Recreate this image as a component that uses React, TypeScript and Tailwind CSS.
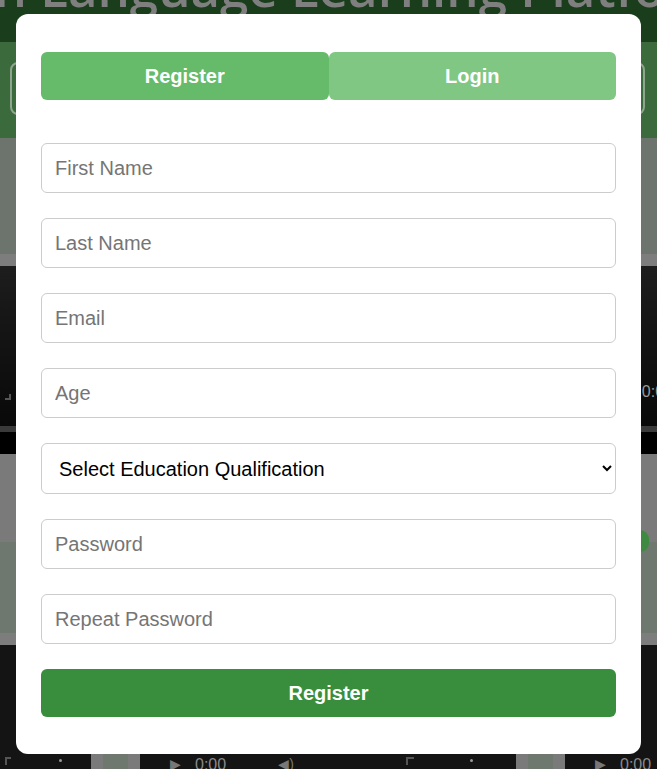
import { useState } from 'react';

const sans = { fontFamily: '"Liberation Sans", Arial, sans-serif' };

const Backdrop = () => (
  <div className="flex flex-col w-full h-full">
    <div className="h-[42px] bg-[#1a3d1b] overflow-hidden shrink-0">
      <p
        className="whitespace-nowrap text-[51px] leading-none font-semibold text-[#7f7f7f] ml-[-76px] mt-[-38px]"
        style={{ fontFamily: '"Open Sans", sans-serif' }}
      >
        Sign Language Learning Platform
      </p>
    </div>
    <div className="h-[96px] bg-[#3b6b3d] px-[10px] pt-[20px] shrink-0">
      <div className="h-[53px] w-[635px] rounded-lg border-2 border-[#8fa58f]" />
    </div>
    <div className="h-[116px] bg-[#6d746d] shrink-0" />
    <div className="h-[12px] bg-[#7d7d7d] shrink-0" />
    <div className="h-[160px] bg-gradient-to-b from-[#1d1d1d] to-[#090909] flex items-end justify-between pb-[26px] shrink-0">
      <span className="ml-[5px] w-[6px] h-[6px] border-r-2 border-b-2 border-[#555]" />
      <span className="text-[16px] leading-none text-[#9a9a9a] mr-[-16px]" style={sans}>
        0:00
      </span>
    </div>
    <div className="h-[6px] bg-[#3a3a3a] shrink-0" />
    <div className="h-[22px] bg-black shrink-0" />
    <div className="h-[88px] bg-[#7a7a7a] shrink-0" />
    <div className="h-[91px] bg-[#6e786e] flex justify-end shrink-0">
      <span className="mt-[-12px] mr-[8px] w-[18px] h-[22px] rounded-full bg-[#3f8a42]" />
    </div>
    <div className="h-[12px] bg-[#7d7d7d] shrink-0" />
    <div className="flex-1 flex bg-[#141414]">
      <div className="w-[91px] flex items-start pt-[112px] text-[#8a8a8a]">
        <span className="ml-[5px] w-[6px] h-[8px] border-l-2 border-t-2 border-[#555]" />
        <span className="ml-[48px] w-[3px] h-[3px] rounded-full bg-[#9a9a9a] mt-[2px]" />
      </div>
      <div className="w-[49px] bg-[#7a7a7a] flex justify-center">
        <div className="w-[25px] bg-[#6e786e]" />
      </div>
      <div className="w-[376px] flex items-start pt-[112px] text-[#8a8a8a]" style={sans}>
        <span className="ml-[30px] text-[14px] leading-none text-[#777]">▶</span>
        <span className="ml-[14px] text-[16px] leading-none">0:00</span>
        <span className="ml-[52px] text-[14px] leading-none text-[#777]">◀)</span>
        <span className="ml-[112px] w-[8px] h-[8px] border-l-2 border-t-2 border-[#555]" />
        <span className="ml-[56px] w-[3px] h-[3px] rounded-full bg-[#9a9a9a] mt-[2px]" />
      </div>
      <div className="w-[49px] bg-[#7a7a7a] flex justify-center">
        <div className="w-[25px] bg-[#6e786e]" />
      </div>
      <div className="flex-1 flex items-start pt-[112px] text-[#8a8a8a]" style={sans}>
        <span className="ml-[30px] text-[14px] leading-none text-[#777]">▶</span>
        <span className="ml-[14px] text-[16px] leading-none">0:00</span>
      </div>
    </div>
  </div>
);

const fieldClass =
  'h-[50px] w-full rounded-md border border-[#cccccc] bg-white px-[13px] text-[20px] text-black placeholder:text-[#757575] outline-none';

export default function App() {
  const [tab, setTab] = useState<'register' | 'login'>('register');

  return (
    <div className="relative w-full h-screen overflow-hidden" style={sans}>
      <Backdrop />
      <div className="absolute inset-0 flex justify-center items-start pt-[14px]">
        <div className="w-[625px] h-[740px] bg-white rounded-xl px-[25px] pt-[38px] pb-[37px] flex flex-col">
          <div className="flex h-[48px]">
            <button
              onClick={() => setTab('register')}
              className="flex-1 rounded-md bg-[#66bb6a] text-white text-[20px] font-bold"
            >
              Register
            </button>
            <button
              onClick={() => setTab('login')}
              className="flex-1 rounded-md bg-[#81c784] text-white text-[20px] font-bold"
            >
              Login
            </button>
          </div>

          <form className="flex flex-col gap-[25px] mt-[43px]" onSubmit={(e) => e.preventDefault()}>
            <input className={fieldClass} type="text" placeholder="First Name" />
            <input className={fieldClass} type="text" placeholder="Last Name" />
            <input className={fieldClass} type="email" placeholder="Email" />
            <input className={fieldClass} type="number" placeholder="Age" />
            <select className={`${fieldClass} h-[51px]`} defaultValue="">
              <option value="">Select Education Qualification</option>
              <option value="school">High School</option>
              <option value="bachelor">Bachelor's Degree</option>
              <option value="master">Master's Degree</option>
            </select>
            <input className={fieldClass} type="password" placeholder="Password" />
            <input className={fieldClass} type="password" placeholder="Repeat Password" />
            <button
              type="submit"
              className="h-[48px] w-full rounded-md bg-[#388e3c] text-white text-[20px] font-bold"
            >
              {tab === 'register' ? 'Register' : 'Login'}
            </button>
          </form>
        </div>
      </div>
    </div>
  );
}
